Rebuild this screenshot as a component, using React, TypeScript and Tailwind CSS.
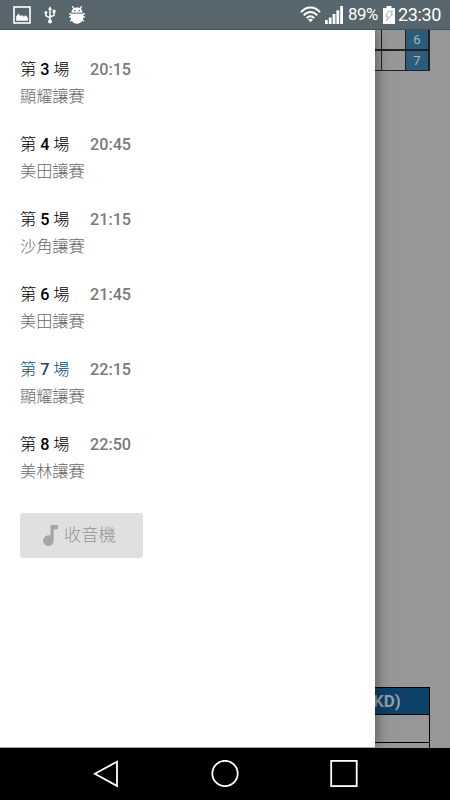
import React from "react";

const races = [
  { no: 3, time: "20:15", name: "顯耀讓賽" },
  { no: 4, time: "20:45", name: "美田讓賽" },
  { no: 5, time: "21:15", name: "沙角讓賽" },
  { no: 6, time: "21:45", name: "美田讓賽" },
  { no: 7, time: "22:15", name: "顯耀讓賽", active: true },
  { no: 8, time: "22:50", name: "美林讓賽" },
];

function StatusBar() {
  return (
    <header className="flex h-[30px] shrink-0 items-center border-b border-[#44535b] bg-[#57666c] text-white">
      <svg className="ml-[13px] h-[18px] w-[18px]" viewBox="0 0 18 18">
        <rect x="1" y="1" width="16" height="16" fill="none" stroke="currentColor" strokeWidth="1.6" />
        <path d="M3.2 14.800V10.500L5.500 7.500l2.200 2.700 1.500-1.200 1.600 1.700 1.700-1.400L14.800 11.500v3.300z" fill="currentColor" />
      </svg>
      <svg className="ml-[13px] h-[18px] w-[12px]" viewBox="0 0 12 18">
        <path d="M6 3v12M1.9 6.5v3.2L6 12.2M10.1 5.5v3.7L6 11" fill="none" stroke="currentColor" strokeWidth="1.5" />
        <path d="M6 .2 8 3.8H4z" fill="currentColor" />
        <circle cx="6" cy="15.6" r="2" fill="currentColor" />
        <circle cx="1.9" cy="6.4" r="1.5" fill="currentColor" />
        <rect x="8.6" y="3.800" width="2.9" height="2.9" fill="currentColor" />
      </svg>
      <svg className="ml-[12px] h-[18px] w-[18px]" viewBox="0 0 18 18">
        <path d="M4.3 .2 6 2.800M13.7 .2 12 2.800M1 7.800h16M1 10.800h16M2 15.300l3-2.100M16 15.300l-3-2.100" stroke="currentColor" strokeWidth="1.3" />
        <path d="M3.4 6.800C3.6 3.300 6 1.500 9 1.500s5.4 1.800 5.600 5.300zM2.600 7.800h12.800v3.300c0 3.800-2.800 6.700-6.400 6.700s-6.400-2.900-6.400-6.700z" fill="currentColor" />
        <path d="M3 7.300h12" stroke="#57666c" strokeWidth=".7" />
        <circle cx="6.8" cy="4.7" r=".8" fill="#57666c" />
        <circle cx="11.2" cy="4.7" r=".8" fill="#57666c" />
      </svg>
      <svg className="ml-auto h-[17px] w-[21px]" viewBox="0 0 21 17">
        <path d="M1 6.200C6.300-.2 14.700-.2 20 6.200M3.800 9.300C7.600 4.900 13.400 4.900 17.200 9.300M6.700 12.200C8.900 9.700 12.100 9.700 14.300 12.200" fill="none" stroke="currentColor" strokeWidth="2" />
        <path d="M8 13.600Q10.500 11.700 13 13.600L10.500 16.300z" fill="currentColor" />
      </svg>
      <svg className="ml-[4px] h-[18px] w-[18px]" viewBox="0 0 18 18">
        <path d="M0 14h2.800v4H0zM3.800 11.500h2.800V18H3.800zM7.600 8h2.800v10H7.600zM11.400 4.200h2.800V18h-2.800zM15.200 0H18v18h-2.800z" fill="currentColor" />
      </svg>
      <span className="ml-[5px] w-[32px] whitespace-nowrap text-[16.800px] leading-[31px] tracking-[-0.400px]">89%</span>
      <svg className="ml-[3px] h-[18px] w-[12px]" viewBox="0 0 12 18">
        <path d="M3.500 0h5v2H12v16H0V2h3.500z" fill="currentColor" />
        <path d="M5.600 5.200h3.800L7.800 8.300h2L3.500 14.500l1.500-4.300H2.800z" fill="none" stroke="#9ba4a8" strokeWidth=".8" />
      </svg>
      <span className="mr-[9px] ml-[3px] w-[43px] whitespace-nowrap text-[18px] leading-[31px] tracking-[-0.350px]">23:30</span>
    </header>
  );
}

function Drawer() {
  return (
    <aside className="z-10 flex w-[375px] shrink-0 flex-col border-b border-[#a5a5a5] bg-white pt-[26px] pl-5 shadow-[0_0_14px_rgba(0,0,0,0.5)]">
      {races.map((race) => (
        <div key={race.no} className="h-[75px]">
          <div className="flex h-[27px] items-center text-[16.200px] leading-[27px]">
            <span className={`w-[70px] whitespace-pre ${race.active ? "text-[#0a4d75]" : "text-black"}`}>
              <span className="font-light">第 </span>
              <span className="font-medium">{race.no}</span>
              <span className="font-light"> 場</span>
            </span>
            <span className="font-medium text-[#7a7a7a]">{race.time}</span>
          </div>
          <div className="text-[16.200px] leading-[28px] font-light text-[#686868]">{race.name}</div>
        </div>
      ))}
      <button className="mt-[7px] flex h-[45px] w-[122.500px] items-center rounded-[3px] bg-[#e0e0e0] text-[#a5a5a5]">
        <svg className="ml-[23px] h-[21px] w-[15px]" viewBox="0 0 15 21">
          <path d="M7.500 0H15v4.200h-4.300v11.500a5.300 5.300 0 1 1-3.200-4.900z" fill="currentColor" />
        </svg>
        <span className="ml-[6px] text-[17.300px] leading-[45px] font-light text-[#969696]">收音機</span>
      </button>
    </aside>
  );
}

function DimmedPage() {
  return (
    <main className="flex min-w-0 flex-1 flex-col justify-between bg-[#979797] text-[#b9c6cf]">
      <div className="grid w-[55px] grid-cols-[7px_24px_24px] grid-rows-[21px_20px] text-center text-[13px]">
        <div className="border-r border-b-2 border-[#222]" />
        <div className="border-r border-b-2 border-[#222]" />
        <div className="border-r-2 border-b-2 border-[#222] bg-[#2f5b7b] leading-[20px] text-[#a5b6c3]">6</div>
        <div className="border-r border-b border-[#222]" />
        <div className="border-r border-b border-[#222]" />
        <div className="border-r-2 border-b border-[#222] bg-[#2f5b7b] leading-[19px] text-[#a5b6c3]">7</div>
      </div>
      <div className="flex h-[61px] w-[55px] flex-col border-t border-r border-black">
        <div className="h-[27px] border-b border-black bg-[#0e4167] text-[17px] leading-[27px] font-bold text-[#929fa9]">
          <span className="-ml-[2px]">KD)</span>
        </div>
        <div className="h-[28px] border-b border-black" />
      </div>
    </main>
  );
}

function NavBar() {
  return (
    <nav className="flex h-[52px] shrink-0 items-center justify-between bg-black pr-[92px] pl-[93px] text-white">
      <svg className="h-[28px] w-[26px]" viewBox="0 0 26 28" fill="none" stroke="currentColor" strokeWidth="1.800">
        <path d="M24 1.700v24.200L1.800 13.800z" />
      </svg>
      <svg className="h-[28px] w-[28px]" viewBox="0 0 28 28" fill="none" stroke="currentColor" strokeWidth="1.800">
        <circle cx="14" cy="13.500" r="12.700" />
      </svg>
      <svg className="h-[28px] w-[28px]" viewBox="0 0 28 28" fill="none" stroke="currentColor" strokeWidth="1.800">
        <rect x="1.200" y=".9" width="25.500" height="25.200" />
      </svg>
    </nav>
  );
}

export default function App() {
  return (
    <div className="flex h-[800px] w-[450px] flex-col overflow-hidden font-[Roboto,'Noto_Sans_CJK_TC',sans-serif]">
      <StatusBar />
      <div className="flex min-h-0 flex-1 overflow-hidden">
        <Drawer />
        <DimmedPage />
      </div>
      <NavBar />
    </div>
  );
}
